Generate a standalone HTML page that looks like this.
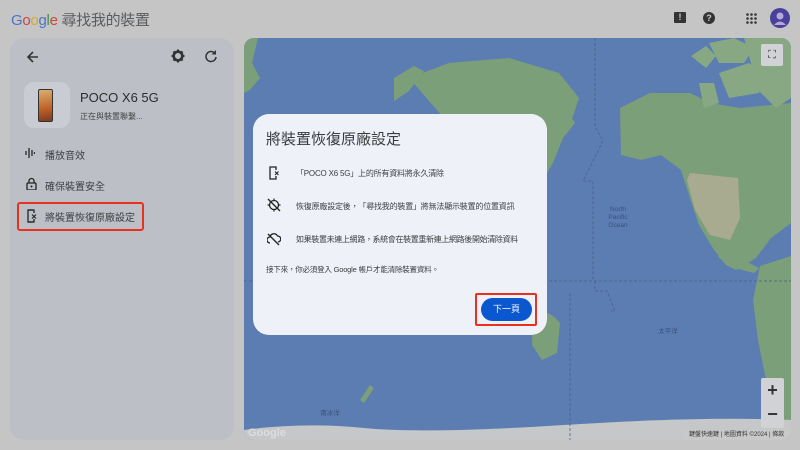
<!DOCTYPE html>
<html><head><meta charset="utf-8"><style>
*{margin:0;padding:0;box-sizing:border-box}
body{width:800px;height:450px;overflow:hidden;background:#c5c5c5;font-family:"Liberation Sans","Noto Sans CJK TC",sans-serif;position:relative;color:#2b2c2e}
.abs{position:absolute}
.panel{left:10px;top:38px;width:224px;height:402px;background:#bcc0c6;border-radius:14px}
.map{left:244px;top:38px;width:547px;height:402px;background:#5c7db1;border-radius:10px;overflow:hidden}
.dlg{left:253px;top:114px;width:294px;height:221px;background:#eef2f8;border-radius:16px}
.t{font-size:10px;color:#3b3d40}
.dt{position:absolute;font-size:8px;color:#3b3d40;white-space:nowrap;letter-spacing:-0.2px}
</style></head><body>
<div class="abs" style="left:11px;top:9px;font-size:15px;letter-spacing:-0.3px"><span style="color:#4a74c8">G</span><span style="color:#c9483c">o</span><span style="color:#d7a92a">o</span><span style="color:#4a74c8">g</span><span style="color:#3f9250">l</span><span style="color:#c9483c">e</span> <span style="color:#5a5c60;font-size:15px">尋找我的裝置</span></div>
<div class="abs" style="left:674px;top:12px;width:12px;height:11px;background:#333;border-radius:1px;color:#ccc;font-size:9px;text-align:center;line-height:11px;font-weight:bold">!</div>
<div class="abs" style="left:703px;top:12px;width:12px;height:12px;background:#333;border-radius:50%;color:#ccc;font-size:9px;text-align:center;line-height:12px;font-weight:bold">?</div>
<svg class="abs" style="left:746px;top:13px" width="11" height="11"><g fill="#333"><circle cx="1.5" cy="1.5" r="1.3"/><circle cx="5.5" cy="1.5" r="1.3"/><circle cx="9.5" cy="1.5" r="1.3"/><circle cx="1.5" cy="5.5" r="1.3"/><circle cx="5.5" cy="5.5" r="1.3"/><circle cx="9.5" cy="5.5" r="1.3"/><circle cx="1.5" cy="9.5" r="1.3"/><circle cx="5.5" cy="9.5" r="1.3"/><circle cx="9.5" cy="9.5" r="1.3"/></g></svg>
<svg class="abs" style="left:770px;top:8px" width="20" height="20"><circle cx="10" cy="10" r="10" fill="#4a3f9a"/><circle cx="10" cy="8" r="3.5" fill="#b5a9d8"/><path d="M4 17 Q10 10 16 17" fill="#b5a9d8"/></svg>

<div class="abs panel"></div>
<svg class="abs" style="left:26px;top:50px" width="14" height="14"><path d="M12 7H2M7 2L2 7l5 5" stroke="#333" stroke-width="1.6" fill="none"/></svg>
<svg class="abs" style="left:171px;top:49px" width="14" height="14"><circle cx="7" cy="7" r="4.3" stroke="#333" stroke-width="2.6" fill="none"/><g stroke="#333" stroke-width="2"><path d="M7 0.5v2M7 11.5v2M0.5 7h2M11.5 7h2M2.4 2.4l1.4 1.4M10.2 10.2l1.4 1.4M2.4 11.6l1.4-1.4M10.2 3.8l1.4-1.4"/></g><circle cx="7" cy="7" r="1.8" fill="#bcc0c6"/></svg>
<svg class="abs" style="left:204px;top:49px" width="14" height="14"><path d="M11 4.5A5 5 0 1 0 12 8" stroke="#333" stroke-width="1.5" fill="none"/><path d="M12 1v4.5H7.5z" fill="#333"/></svg>
<div class="abs" style="left:24px;top:82px;width:46px;height:46px;background:#c9ccd2;border-radius:10px"></div>
<div class="abs" style="left:38px;top:89px;width:15px;height:33px;background:linear-gradient(170deg,#d8b070,#c06028 60%,#7a3a20);border:1px solid #333;border-radius:2px"></div>
<div class="abs" style="left:80px;top:90px;font-size:13px;color:#2b2c2e">POCO X6 5G</div>
<div class="abs t" style="left:80px;top:111px;font-size:8px;color:#444">正在與裝置聯繫...</div>
<svg class="abs" style="left:25px;top:147px" width="10" height="12"><g stroke="#333" stroke-width="1.4"><path d="M1 4v4M4 1v10M7 3v6M9.5 5v2"/></g></svg>
<div class="abs t" style="left:45px;top:147px">播放音效</div>
<svg class="abs" style="left:26px;top:177px" width="11" height="13"><path d="M3 6V4a2.5 2.5 0 0 1 5 0v2" stroke="#222" stroke-width="1.3" fill="none"/><rect x="1" y="6" width="9" height="7" rx="1" fill="none" stroke="#222" stroke-width="1.3"/><circle cx="5.5" cy="9.5" r="1" fill="#222"/></svg>
<div class="abs t" style="left:45px;top:178px">確保裝置安全</div>
<div class="abs" style="left:17px;top:202px;width:127px;height:29px;border:2px solid #e8321f;border-radius:3px"></div>
<svg class="abs" style="left:26px;top:209px" width="11" height="14"><path d="M7 1H2v12h5" stroke="#222" stroke-width="1.3" fill="none"/><path d="M2 1h6v3M8 10v3H2" stroke="#222" stroke-width="1.3" fill="none"/><path d="M6 5.5l4 4M10 5.5l-4 4" stroke="#222" stroke-width="1.1"/></svg>
<div class="abs t" style="left:45px;top:209px">將裝置恢復原廠設定</div>

<div class="abs map">
<svg width="547" height="402" style="position:absolute;left:0;top:0">
<g fill="#7b9f78">
<path d="M0 0h14l-6 25 8 15 -10 12 -6 3z"/>
<path d="M150 40 l20 -12 10 5 -15 20 -15 10z"/>
<path d="M165 40 l40 -15 60 -5 50 15 20 25 -10 30 -20 10 -15 -10 -10 20 -10 -10 -30 -20 -40 0z"/>
<path d="M296 70 l25 0 10 15 -12 15 -10 25 -6 10 -7 -5z"/>
<path d="M376 70 l30 -15 40 0 20 10 30 5 51 -5 v120 l-20 15 -15 20 -20 12 -10 -5 -12 -15 -15 -25 -10 -30 -8 -25 -20 -15 -20 5 -20 -5z"/>
<path d="M470 205 l10 10 15 5 20 10 -5 5 -20 -5 -15 -10z"/>
<path d="M447 18 l15 -10 10 10 -10 12z M465 5 l25 -5 20 10 -10 15 -25 0z M475 35 l30 -10 15 10 -5 20 -30 5z M500 0h47v60l-15 10 -20 -20 -5 -25z M455 45 l15 0 5 20 -15 5z" fill="#88a883"/>
<path d="M516 228 l31 -10 v184h-20l-5 -60 -8 -40 -5 -40z"/>
<path d="M289 275 q15 -5 27 10 l-3 30 -15 7 -10 -15z"/>
<path d="M126 347 l-10 15 4 3 10 -15z"/>
</g>
<path d="M446 135 l48 5 2 40 -10 22 -20 -5 -15 -25 -8 -30z" fill="#a9ab90"/>
<path d="M0 392 q60 -8 120 -2 t200 -3 t227 -5 v20H0z" fill="#c5c7c9"/>
<g stroke="#4b5f86" stroke-dasharray="3 2" fill="none" stroke-width=".8"><path d="M0 243H547"/><path d="M351 0v88l8 15 -20 40 10 0 v100"/><path d="M351 243v10h12l8 20 -5 0"/><path d="M326 255v147"/></g>
<g fill="#3c4f80" font-size="6.5" text-anchor="middle" font-family="Liberation Sans,sans-serif"><text x="374" y="173">North</text><text x="374" y="181">Pacific</text><text x="374" y="189">Ocean</text><text x="424" y="295">太平洋</text><text x="86" y="377">南冰洋</text></g>
<text x="4" y="398" font-size="11" fill="#ddd" font-weight="bold" font-family="Liberation Sans">Google</text>
</svg>
<div class="abs" style="left:517px;top:6px;width:22px;height:22px;background:#d0d2d5;border-radius:2px;font-size:11px;text-align:center;line-height:22px;color:#333">⛶</div>
<div class="abs" style="left:517px;top:340px;width:23px;height:50px;background:#d0d2d5;border-radius:2px;font-size:18px;text-align:center;line-height:24px;color:#333;font-weight:bold">+<br>−</div>
<div class="abs" style="left:440px;top:392px;width:107px;height:10px;background:#c9c9c9;font-size:6px;color:#333;line-height:10px;padding-left:5px;white-space:nowrap;overflow:hidden">鍵盤快速鍵 | 地圖資料 ©2024 | 條款</div>
</div>

<div class="abs dlg"></div>
<div class="abs" style="left:266px;top:128px;font-size:15px;color:#3a3b3e">將裝置恢復原廠設定</div>
<svg class="abs" style="left:268px;top:166px" width="12" height="14"><path d="M7 1H2v12h6V10M2 1h6v3" stroke="#222" stroke-width="1.3" fill="none"/><path d="M7 5.5l3.5 3.5M10.5 5.5L7 9" stroke="#222" stroke-width="1.1"/></svg>
<div class="dt" style="left:296px;top:168px">「POCO X6 5G」上的所有資料將永久清除</div>
<svg class="abs" style="left:267px;top:198px" width="14" height="14"><circle cx="7" cy="7" r="4.5" stroke="#222" stroke-width="1.3" fill="none"/><path d="M1 1l12 12" stroke="#222" stroke-width="1.3"/><path d="M7 0.5v2M7 11.5v2M0.5 7h2M11.5 7h2" stroke="#222" stroke-width="1.2"/></svg>
<div class="dt" style="left:296px;top:201px">恢復原廠設定後，「尋找我的裝置」將無法顯示裝置的位置資訊</div>
<svg class="abs" style="left:267px;top:232px" width="14" height="14"><path d="M3 11a3 3 0 0 1 0-6 4 4 0 0 1 7.5-1 3 3 0 0 1 0.5 6" stroke="#222" stroke-width="1.3" fill="none"/><path d="M1 2l11 11" stroke="#222" stroke-width="1.3"/></svg>
<div class="dt" style="left:296px;top:234px;letter-spacing:-0.35px">如果裝置未連上網路，系統會在裝置重新連上網路後開始清除資料</div>
<div class="dt" style="left:266px;top:264px;font-size:7.5px">接下來，你必須登入 Google 帳戶才能清除裝置資料。</div>
<div class="abs" style="left:475px;top:293px;width:62px;height:33px;border:2px solid #e8321f;border-radius:2px"></div>
<div class="abs" style="left:481px;top:298px;width:51px;height:23px;background:#0b57d0;border-radius:12px;color:#fff;font-size:9px;text-align:center;line-height:23px">下一頁</div>
</body></html>
